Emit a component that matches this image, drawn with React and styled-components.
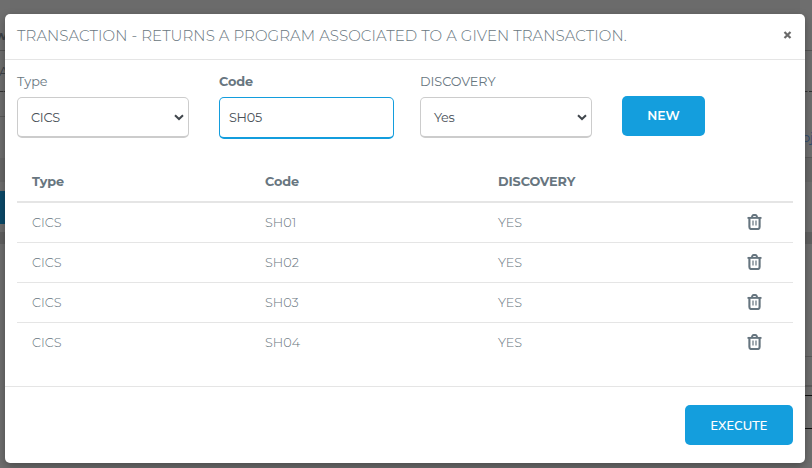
import React, { useState } from 'react';
import styled, { createGlobalStyle } from 'styled-components';

const Global = createGlobalStyle`
  * { box-sizing: border-box; }
  body { margin: 0; overflow: hidden; font-family: Montserrat, Inter, sans-serif; color: #687680; }
`;

const Page = styled.div`
  position: relative;
  width: 812px;
  height: 468px;
  padding: 14px 7px 5px 5px;
  background: #6b6b6b;
`;

/* Strips of the dimmed page that stay visible beside the dialog. */
const Behind = styled.div`
  position: absolute;
  top: 0;
  bottom: 0;
  ${(p) => (p.$side === 'left' ? 'left: 0; width: 10px;' : 'right: 0; width: 12px;')}
  display: flex;
  flex-direction: column;
  overflow: hidden;
`;

const Band = styled.div`
  flex: none;
  height: ${(p) => p.$h}px;
  background: ${(p) => p.$bg || '#6e6e6e'};
  border-bottom: ${(p) => p.$line || '0'};
  font-size: 13px;
  font-weight: ${(p) => p.$weight || 400};
  line-height: ${(p) => p.$lh || p.$h}px;
  color: ${(p) => p.$color || '#3c4146'};
  text-indent: ${(p) => p.$indent || 0}px;
`;

const Dialog = styled.section`
  position: relative;
  display: flex;
  flex-direction: column;
  width: 800px;
  height: 449px;
  background: #fff;
  border-radius: 5px;
  box-shadow: 0 3px 9px rgba(0, 0, 0, 0.3);
`;

const Header = styled.header`
  display: flex;
  justify-content: space-between;
  height: 46px;
  padding: 0 12px;
  border-bottom: 1px solid #e5e5e5;
`;

const Title = styled.h1`
  margin: 0;
  font-size: 15px;
  font-weight: 300;
  line-height: 44px;
  letter-spacing: 0.08px;
  white-space: nowrap;
`;

const Close = styled.button`
  display: flex;
  align-items: center;
  width: 9px;
  height: 42px;
  margin-right: 1px;
  padding: 0;
  border: 0;
  background: none;
  color: #6a6a6a;
`;

const Form = styled.div`
  display: grid;
  grid-template-columns: 202px 201px 202px 83px;
  height: 102px;
  padding: 13px 12px 0;
`;

const Field = styled.label`
  display: flex;
  flex-direction: column;
  padding-right: 30px;
  font-size: 12.8px;
  font-weight: ${(p) => (p.$bold ? 700 : 400)};
  line-height: 17px;
  letter-spacing: -0.05px;
`;

const controlShape = `
  margin-top: 7px;
  border-radius: 5px;
  background: #fff;
  color: #495057;
  font: 400 12.8px/18px Montserrat, Inter, sans-serif;
  letter-spacing: -0.25px;
  outline: none;
`;

const SelectBox = styled.div`
  ${controlShape}
  display: flex;
  align-items: center;
  justify-content: space-between;
  width: 172px;
  height: 41px;
  padding: 0 4px 0 13px;
  border: 1px solid #ccc;
  border-bottom-width: 2px;
`;

const Value = styled.span`
  padding-top: 2px;
`;

const TextInput = styled.input`
  ${controlShape}
  width: 175px;
  height: 42px;
  padding: 0 9px;
  border: 1px solid #139ddd;
  border-bottom-width: 2px;
`;

const Button = styled.button`
  width: ${(p) => p.$width}px;
  height: 40px;
  padding: ${(p) => p.$pad || 0};
  border: 0;
  border-radius: 5px;
  background: #149edd;
  color: #fff;
  font: ${(p) => p.$font};
`;

const NewSlot = styled.div`
  padding-top: 23px;
`;

const Table = styled.div`
  margin: 0 12px;
`;

const Row = styled.div`
  display: grid;
  grid-template-columns: 233px 233px 232px 1fr;
  align-items: center;
  height: ${(p) => (p.$head ? 41 : 40)}px;
  padding: 0 0 2px 15px;
  border-bottom: ${(p) => (p.$head ? '2px' : '1px')} solid ${(p) => (p.$last ? 'transparent' : '#e5e5e5')};
  font-size: 12.8px;
  font-weight: ${(p) => (p.$head ? 700 : 300)};
  letter-spacing: ${(p) => (p.$head ? -0.1 : 0)}px;
`;

const Cell = styled.span`
  padding-top: 2px;
`;

const Trash = styled.button`
  display: flex;
  width: 15px;
  height: 16px;
  margin-left: 17px;
  padding: 0;
  border: 0;
  background: none;
  color: #66757f;
`;

const Footer = styled.footer`
  display: flex;
  justify-content: flex-end;
  margin-top: auto;
  height: 77px;
  padding: 18px 12px 0;
  border-top: 1px solid #e5e5e5;
`;

const Chevron = () => (
  <svg width="10" height="7" viewBox="0 0 10 7" fill="none" stroke="#40464c" strokeWidth="2">
    <path d="M1 1.2 5 5 9 1.2" />
  </svg>
);

const TrashIcon = () => (
  <svg width="15" height="16" viewBox="0 0 15 16" fill="none" stroke="currentColor">
    <path d="M0.5 3.9h14" strokeWidth="1.9" />
    <path d="M4.900 3.500 5.300 2Q5.600 1.100 6.500 1.100h2Q9.400 1.100 9.700 2l.4 1.500" strokeWidth="2" />
    <path d="M2.400 4v9.100q0 1.900 1.700 1.900h6.800q1.700 0 1.700-1.900V4" strokeWidth="2.100" />
    <path d="M6 6.500v5M9 6.500v5" strokeWidth="1.200" />
  </svg>
);

const CloseIcon = () => (
  <svg width="9" height="8" viewBox="0 0 9 8" stroke="currentColor" strokeWidth="2.2">
    <path d="M1.500 1 7.500 7M7.500 1 1.500 7" />
  </svg>
);

const codes = ['SH01', 'SH02', 'SH03', 'SH04'];

export default function App() {
  const [code, setCode] = useState('SH05');
  return (
    <>
      <Global />
      <Page>
        <Behind $side="left">
          <Band $h={51} $lh={70} $weight={700} $indent={-5} $line="1px solid #555">w</Band>
          <Band $h={41} $line="1px dashed #333" $indent={-1}>A</Band>
          <Band $h={25} $line="1px solid #5a5a5a" />
          <Band $h={41} />
          <Band $h={24} $bg="#676767" />
          <Band $h={9} />
          <Band $h={33} $bg="#0b4a69" />
          <Band $h={8} />
          <Band $h={12} $bg="#606060" />
          <Band $h={224} />
        </Behind>
        <Behind $side="right">
          <Band $h={51} $line="1px solid #555" />
          <Band $h={41} $line="1px dashed #333" />
          <Band $h={66} $lh={90} $indent={2} $line="1px solid #5a5a5a" $color="#2c4a70">oj</Band>
          <Band $h={24} $bg="#676767" />
          <Band $h={50} />
          <Band $h={12} $bg="#606060" />
          <Band $h={113} $line="1px solid #5a5a5a" />
          <Band $h={30} $line="2px solid #5c5c5c" />
          <Band $h={9} $line="1px solid #111" />
          <Band $h={33} $line="1px solid #111" />
          <Band $h={39} />
        </Behind>
        <Dialog>
          <Header>
            <Title>TRANSACTION - RETURNS A PROGRAM ASSOCIATED TO A GIVEN TRANSACTION.</Title>
            <Close aria-label="Close"><CloseIcon /></Close>
          </Header>
          <Form>
            <Field>Type<SelectBox><Value>CICS</Value><Chevron /></SelectBox></Field>
            <Field $bold>Code<TextInput value={code} onChange={(e) => setCode(e.target.value)} /></Field>
            <Field>DISCOVERY<SelectBox><Value>Yes</Value><Chevron /></SelectBox></Field>
            <NewSlot><Button $width={83} $pad="0 0 2px" $font="600 12.4px Montserrat, Inter, sans-serif">NEW</Button></NewSlot>
          </Form>
          <Table>
            <Row $head><Cell>Type</Cell><Cell>Code</Cell><Cell>DISCOVERY</Cell></Row>
            {codes.map((c, i) => (
              <Row key={c} $last={i === codes.length - 1}>
                <Cell>CICS</Cell><Cell>{c}</Cell><Cell>YES</Cell>
                <Trash aria-label={`Delete ${c}`}><TrashIcon /></Trash>
              </Row>
            ))}
          </Table>
          <Footer><Button $width={108} $pad="2px 0 0" $font="600 12.8px Nunito, 'Open Sans', sans-serif">EXECUTE</Button></Footer>
        </Dialog>
      </Page>
    </>
  );
}
